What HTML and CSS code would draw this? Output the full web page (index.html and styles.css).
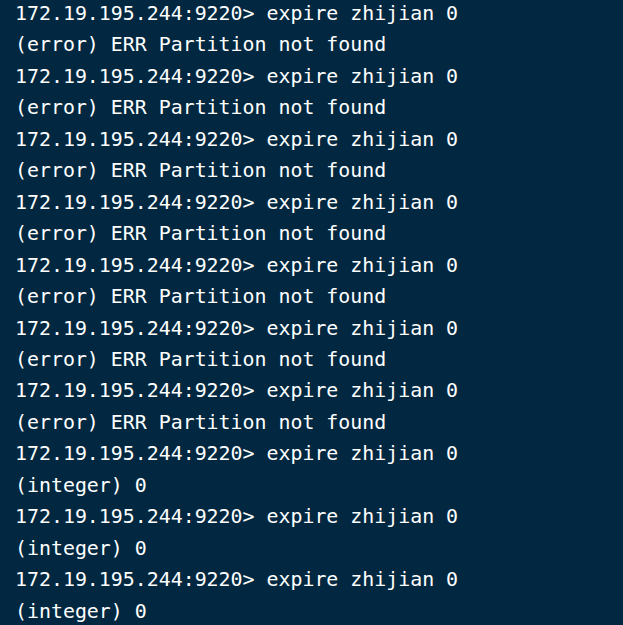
FILE: index.html
```html
<!DOCTYPE html>
<html>
<head>
<meta charset="utf-8">
<link rel="stylesheet" href="styles.css">
</head>
<body>
<div class="term">
<div class="line">172.19.195.244:9220&gt; expire zhijian 0</div>
<div class="line">(error) ERR Partition not found</div>
<div class="line">172.19.195.244:9220&gt; expire zhijian 0</div>
<div class="line">(error) ERR Partition not found</div>
<div class="line">172.19.195.244:9220&gt; expire zhijian 0</div>
<div class="line">(error) ERR Partition not found</div>
<div class="line">172.19.195.244:9220&gt; expire zhijian 0</div>
<div class="line">(error) ERR Partition not found</div>
<div class="line">172.19.195.244:9220&gt; expire zhijian 0</div>
<div class="line">(error) ERR Partition not found</div>
<div class="line">172.19.195.244:9220&gt; expire zhijian 0</div>
<div class="line">(error) ERR Partition not found</div>
<div class="line">172.19.195.244:9220&gt; expire zhijian 0</div>
<div class="line">(error) ERR Partition not found</div>
<div class="line">172.19.195.244:9220&gt; expire zhijian 0</div>
<div class="line">(integer) 0</div>
<div class="line">172.19.195.244:9220&gt; expire zhijian 0</div>
<div class="line">(integer) 0</div>
<div class="line">172.19.195.244:9220&gt; expire zhijian 0</div>
<div class="line">(integer) 0</div>
</div>
</body>
</html>
```

FILE: styles.css
```css
html, body {
  margin: 0;
  padding: 0;
  background: #012840;
  height: 100%;
  overflow: hidden;
}
.term {
  padding: 0 0 0 15px;
  margin-top: -2px;
  font-family: "DejaVu Sans Mono", monospace;
  font-size: 19.9px;
  line-height: 31.45px;
  color: #ffffff;
}
.line {
  white-space: pre;
}
```
